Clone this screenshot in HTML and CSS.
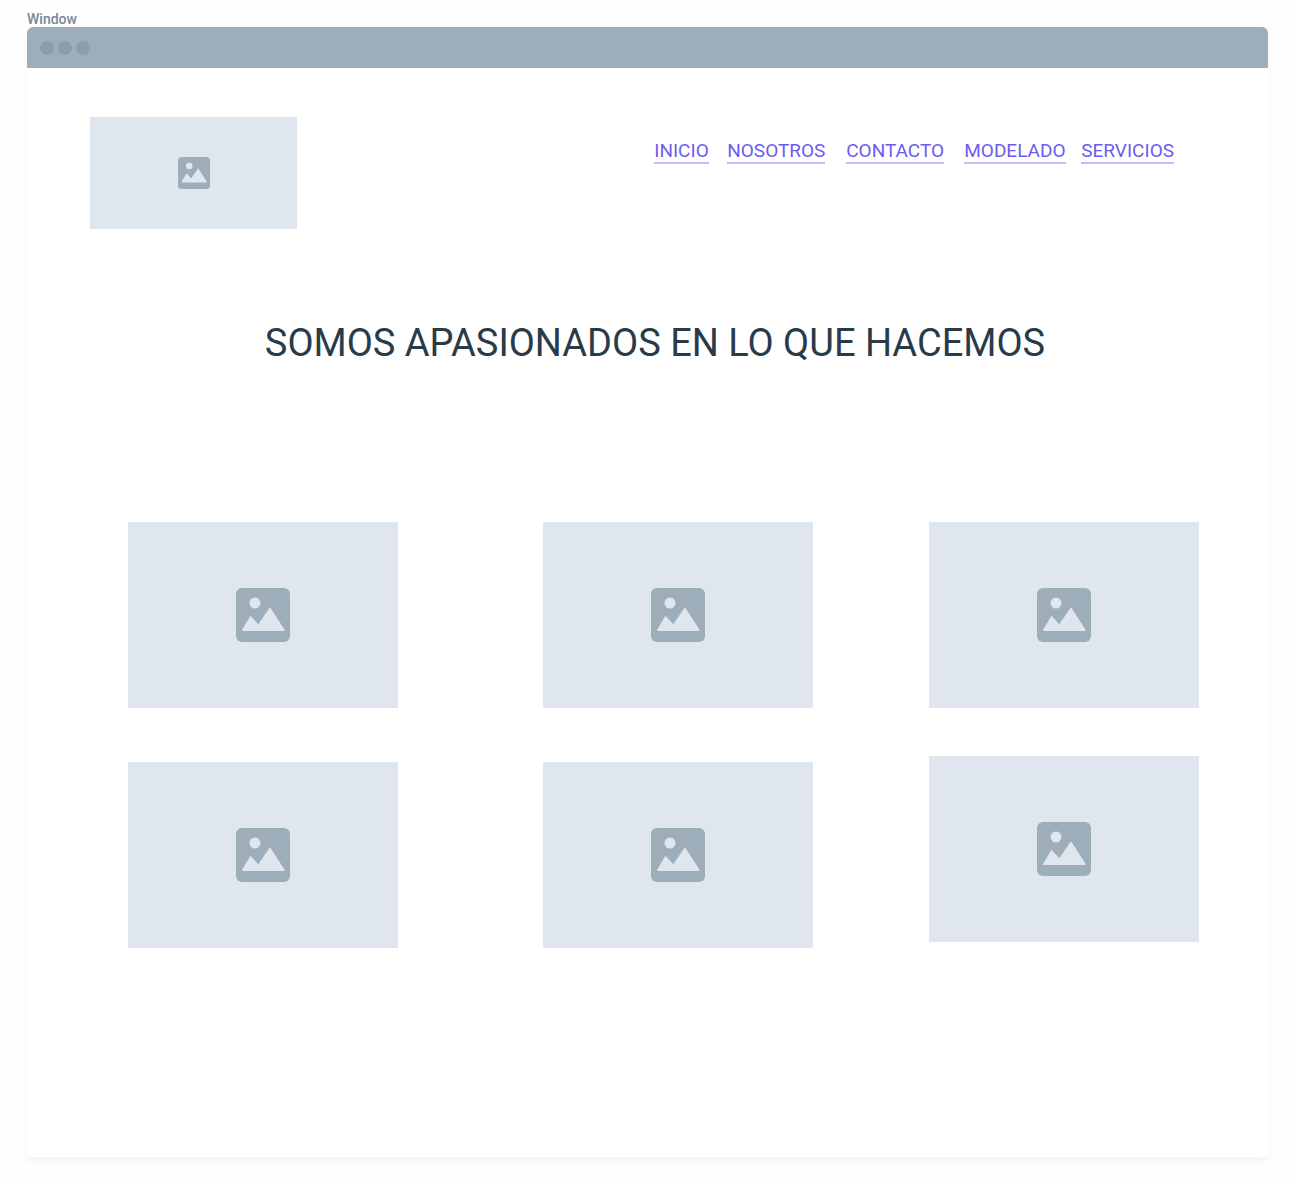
FILE: index.html
```html
<!DOCTYPE html>
<html lang="es">
<head>
<meta charset="utf-8">
<meta name="viewport" content="width=device-width, initial-scale=1">
<title>Window</title>
<link rel="stylesheet" href="styles.css">
</head>
<body>
<svg class="sprite" aria-hidden="true">
  <symbol id="picture" viewBox="0 0 54 54">
    <rect class="icon-frame" width="54" height="54" rx="6"/>
    <circle class="icon-shape" cx="19" cy="15" r="5.500"/>
    <path class="icon-shape" d="M14 28.400Q14.600 27.500 15.200 28.400L22.300 36.200L33.400 20Q34 19.200 34.600 20L48.400 41.400Q49 43 47.500 43H7Q5.500 43 6.300 41.400Z"/>
  </symbol>
</svg>
<p class="frame-label">Window</p>
<div class="window">
  <div class="titlebar"><span class="dot"></span><span class="dot"></span><span class="dot"></span></div>
  <header class="header">
    <div class="picture logo"><svg class="icon icon-small" role="img" aria-label="Logo"><use href="#picture"/></svg></div>
    <nav class="nav">
      <a class="link" href="#inicio">INICIO</a>
      <a class="link" href="#nosotros">NOSOTROS</a>
      <a class="link" href="#contacto">CONTACTO</a>
      <a class="link" href="#modelado">MODELADO</a>
      <a class="link" href="#servicios">SERVICIOS</a>
    </nav>
  </header>
  <main>
    <h1 class="title">SOMOS APASIONADOS EN LO QUE HACEMOS</h1>
    <div class="gallery">
      <div class="column">
        <div class="picture card"><svg class="icon" role="img" aria-label="Imagen 1"><use href="#picture"/></svg></div>
        <div class="picture card"><svg class="icon" role="img" aria-label="Imagen 4"><use href="#picture"/></svg></div>
      </div>
      <div class="column column-middle">
        <div class="picture card"><svg class="icon" role="img" aria-label="Imagen 2"><use href="#picture"/></svg></div>
        <div class="picture card"><svg class="icon" role="img" aria-label="Imagen 5"><use href="#picture"/></svg></div>
      </div>
      <div class="column column-tight">
        <div class="picture card"><svg class="icon" role="img" aria-label="Imagen 3"><use href="#picture"/></svg></div>
        <div class="picture card"><svg class="icon" role="img" aria-label="Imagen 6"><use href="#picture"/></svg></div>
      </div>
    </div>
  </main>
</div>
</body>
</html>
```
FILE: styles.css
```css
* { box-sizing: border-box; }

body {
  margin: 0;
  padding: 11px 28px 26px 27px;
  background: #fefefe;
  color: #293b49;
  font-family: Roboto, "Liberation Sans", sans-serif;
}

.sprite { position: absolute; width: 0; height: 0; }
.icon-frame { fill: #9eadba; }
.icon-shape { fill: #dfe6ee; }

.frame-label {
  margin: 0;
  color: #788896;
  font-size: 14px;
  font-weight: 500;
  line-height: 16px;
}

.window {
  min-height: calc(100vh - 53px);
  border-radius: 6px 6px 0 0;
  background: #fff;
  box-shadow: 0 3px 10px rgba(0, 0, 0, .05);
}

.titlebar {
  display: flex;
  align-items: center;
  gap: 4px;
  height: 41px;
  padding-left: 13px;
  border-radius: 6px 6px 0 0;
  background: #9eadba;
}

.dot { width: 14px; height: 14px; border-radius: 50%; background: #8e9dac; }

.header {
  display: flex;
  justify-content: space-between;
  align-items: flex-start;
  padding: 49px 94px 0 63px;
}

.picture {
  display: flex;
  align-items: center;
  justify-content: center;
  background: #dfe6ee;
}

.logo { width: 207px; height: 112px; }
.icon { width: 54px; height: 54px; }
.icon-small { width: 32px; height: 32px; }

.nav {
  display: grid;
  grid-template-columns: 73px 119px 118px 117px auto;
  justify-items: start;
  margin-top: 22px;
}

.link {
  border-bottom: 2px solid #c6bdfc;
  color: #6c5cf0;
  font-size: 19px;
  line-height: 23px;
  text-decoration: none;
}

.title {
  margin: 90px 0 0;
  padding-left: 15px;
  font-size: 38px;
  font-weight: 400;
  line-height: 48px;
  text-align: center;
}

.gallery {
  display: flex;
  align-items: flex-start;
  padding: 155px 69px 80px 101px;
}

.column {
  display: flex;
  flex: 1;
  flex-direction: column;
  gap: 54px;
}

.column-middle { margin: 0 116px 0 145px; }
.column-tight { gap: 48px; }
.card { aspect-ratio: 270 / 186; }
```
